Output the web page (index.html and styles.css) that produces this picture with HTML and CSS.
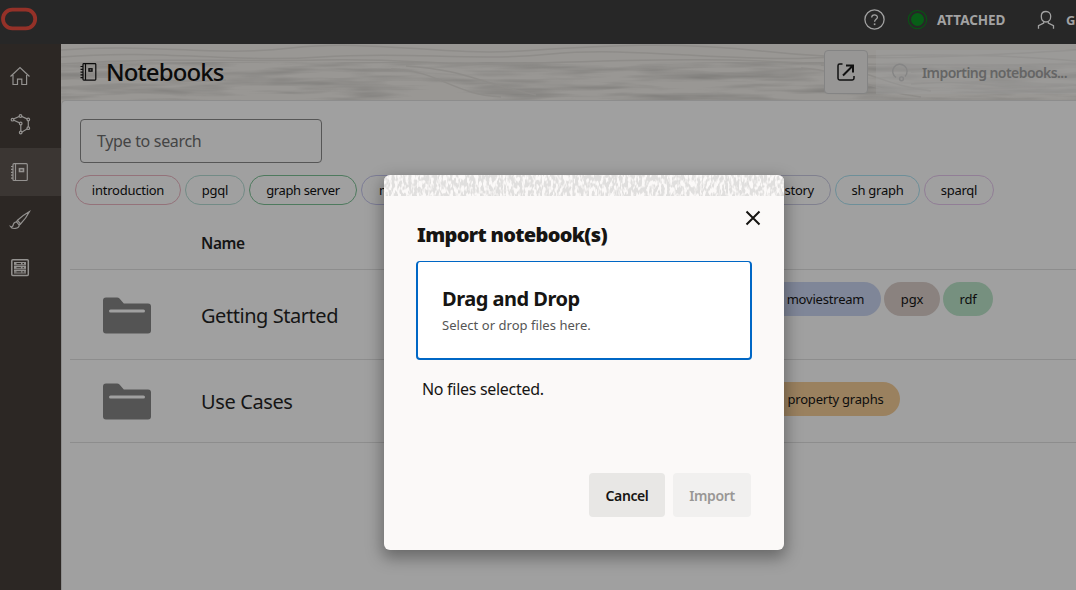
FILE: index.html
```html
<!DOCTYPE html>
<html lang="en">
<head>
<meta charset="utf-8">
<title>Notebooks</title>
<link rel="stylesheet" href="styles.css">
</head>
<body>
<div class="app">
  <header class="topbar">
    <svg class="logo" width="38" height="26" viewBox="0 0 38 26"><rect x="3" y="3.7" width="32.2" height="18.6" rx="9.3" fill="none" stroke="#943128" stroke-width="3.8"/></svg>
    <div class="topbar-right">
      <svg class="help" width="22" height="22" viewBox="0 0 22 22" fill="none" stroke="#a2a2a2" stroke-width="1.3"><circle cx="11.500" cy="10.500" r="9.600"/><path d="M8.700 8.500c0-3.600 5.700-3.500 5.700-.2 0 2.100-2.800 2-2.800 4.500"/><path d="M11.600 14.400v1.700" stroke-width="1.600"/></svg>
      <svg class="status" width="22" height="22" viewBox="0 0 22 22"><circle cx="11.500" cy="10.500" r="9.200" fill="none" stroke="#0c4f16" stroke-width="1.200"/><circle cx="11.500" cy="10.500" r="6.500" fill="#085e17"/></svg>
      <span class="attached">ATTACHED</span>
      <svg class="user" width="18" height="20" viewBox="0 0 18 20" fill="none" stroke="#a2a2a2" stroke-width="1.300"><path d="M9 1.500c-3 0-4.700 2-4.700 4.700C4.300 9.500 6 12 9 12s4.700-2.500 4.700-5.800C13.700 3.500 12 1.500 9 1.500z"/><path d="M6.700 11.500v1.700L1.500 15.700v3M11.300 11.500v1.700l5.200 2.500v3"/></svg>
      <span class="account">G</span>
    </div>
  </header>
  <div class="body">
    <nav class="sidebar">
      <a class="nav"><svg width="22" height="22" viewBox="0 0 22 22"><path d="M1.500 11.500 11 2.500l9.500 9M4 10v9.500h4.500v-5.300h4.300v5.300h4.800V10"/></svg></a>
      <a class="nav"><svg width="22" height="22" viewBox="0 0 22 22"><path d="M3.300 6.500 11.500 3l7.800 3.500v8.700l-7.500 4.500V10.500z"/><g class="dots"><circle cx="3.500" cy="6.700" r="1.300"/><circle cx="11.500" cy="3" r="1.300"/><circle cx="19.300" cy="6.500" r="1.300"/><circle cx="11.700" cy="10.500" r="1.300"/><circle cx="19.300" cy="15.200" r="1.300"/><circle cx="11.700" cy="19.500" r="1.300"/></g></svg></a>
      <a class="nav active"><svg width="22" height="22" viewBox="0 0 22 22"><rect x="4" y="2.700" width="14.300" height="16.800" rx="1"/><path d="M6.500 3v16.500M2 5.500h2M2 8.400h2M2 11.300h2M2 14.200h2M2 17.100h2"/><rect x="10.500" y="7.700" width="4" height="2.800" stroke-width="1.600"/></svg></a>
      <a class="nav"><svg width="22" height="22" viewBox="0 0 22 22"><path d="M20.500 2.500C16 5 12 8 8.500 11.300l3 3.700C15 11.500 18 7.500 20.500 2.500zM8.500 11.300l-1 1.500 2.700 3.400 1.300-1.200M7.500 12.800c-2 .2-3.200 1.500-3.500 4-.4 1-1.500 1.200-2.500.6 1.500 3.400 8.500 2.400 8.700-1.200"/></svg></a>
      <a class="nav"><svg width="22" height="22" viewBox="0 0 22 22"><rect x="2.800" y="2.800" width="16.500" height="15.700" rx="1" stroke-width="1.500"/><path stroke-width="1.200" d="M5 5.500h12M5 7.800h12M5 9.600h12M5 11.900h12M5 13.700h12M5 16h12"/><path stroke-width="1.400" d="M5 6.700h2.500M12 6.700h1.500M15 6.700h2M5 10.800h2.500M12 10.800h1.500M15 10.800h2M5 14.900h2.500M12 14.900h1.500M15 14.900h2"/></svg></a>
    </nav>
    <main class="main">
      <div class="page-head">
        <svg class="grain" width="1015" height="56">
          <defs>
            <filter id="wood" x="0" y="0" width="100%" height="100%" color-interpolation-filters="sRGB"><feTurbulence type="fractalNoise" baseFrequency="0.012 0.14" numOctaves="3" seed="8"/><feColorMatrix values="0 0 0 0 .45  0 0 0 0 .445  0 0 0 0 .435  1.3 0 0 0 -.5"/></filter>
            <filter id="stipple" x="0" y="0" width="100%" height="100%" color-interpolation-filters="sRGB"><feTurbulence type="fractalNoise" baseFrequency="0.36 0.16" numOctaves="2" seed="4"/><feColorMatrix values="0 0 0 0 .88  0 0 0 0 .875  0 0 0 0 .87  5 0 0 0 -1.9"/></filter>
          </defs>
          <rect y="18" width="1015" height="38" filter="url(#wood)"/>
          <g fill="none" stroke="#8e8c89" stroke-width="1.500">
            <path d="M0 6C90-1 150 13 230 4s150 8 230 3 150-10 240 0 170 8 315-1M0 13c100-8 170 6 260 0s150 5 230-3 170 8 260 4 180-5 265 3M0 20c110-7 180-2 260-4s130 6 190 4 170-7 250-3 170 5 315 3"/>
            <path d="M330 25c50 2 60 25 110 28M345 22c60 4 70 16 130 29M740 24c50 3 70 24 120 29M760 21c50 4 60 20 110 26M850 28c60-6 100 8 165 1M850 40c60-6 100 8 165 1M0 35c60-6 100 6 165 1"/>
          </g>
        </svg>
        <div class="title"><svg width="20" height="22" viewBox="0 0 20 22" fill="none" stroke="#0b0b0b" stroke-width="1.200"><rect x="4" y="2.600" width="12.800" height="16.500" rx=".8"/><path d="M6.500 3v16M1.500 5.500H4M1.500 8.300H4M1.500 11.100H4M1.500 13.900H4M1.500 16.700H4"/><rect x="10" y="7.800" width="3" height="2.300" stroke-width="1.400"/></svg><h1>Notebooks</h1></div>
        <div class="head-actions">
          <button class="open"><svg width="22" height="22" viewBox="0 0 22 22" fill="none" stroke="#101010" stroke-width="1.500"><path d="M7.500 3H4.700Q3 3 3 4.700v12.600Q3 19 4.700 19h12.600q1.700 0 1.700-1.700V15"/><path stroke-width="2" d="M8 14.500 18 4.500M11 4.500h7v7"/></svg></button>
          <div class="importing"><svg width="18" height="20" viewBox="0 0 18 20" fill="none" stroke="#858585" stroke-width="1.400"><path d="M5 15.500A7.200 7.200 0 1 1 14 14.500"/><circle cx="10.500" cy="16.800" r="1.900"/></svg><span>Importing notebooks...</span></div>
        </div>
      </div>
      <section class="content">
        <div class="search">Type to search</div>
        <div class="filters">
          <span class="pill intro"><b>introduction</b></span><span class="pill pgql"><b>pgql</b></span><span class="pill server"><b>graph server</b></span><span class="pill movie"><b>moviestream</b></span><span class="pill history"><b>property story</b></span><span class="pill sh"><b>sh graph</b></span><span class="pill sparql"><b>sparql</b></span>
        </div>
        <div class="table">
          <div class="row head"><span class="name">Name</span></div>
          <div class="row first">
            <svg class="folder" width="48" height="37" viewBox="0 0 48 37"><path fill="#545454" fill-rule="evenodd" d="M3 .5h11q1.500 0 2.500 1l4.300 5H45q3 0 3 3v24q0 3-3 3H3q-3 0-3-3v-30Q0 .5 3 .5zM7.500 12.500a1.500 1.500 0 0 0 0 3h33a1.500 1.500 0 0 0 0-3z"/></svg>
            <span class="name">Getting Started</span>
            <span class="tags"><span class="tag blue">moviestream</span><span class="tag brown">pgx</span><span class="tag green">rdf</span></span>
          </div>
          <div class="row second">
            <svg class="folder" width="48" height="37" viewBox="0 0 48 37"><path fill="#545454" fill-rule="evenodd" d="M3 .5h11q1.500 0 2.500 1l4.300 5H45q3 0 3 3v24q0 3-3 3H3q-3 0-3-3v-30Q0 .5 3 .5zM7.500 12.500a1.500 1.500 0 0 0 0 3h33a1.500 1.500 0 0 0 0-3z"/></svg>
            <span class="name cases">Use Cases</span>
            <span class="tags"><span class="tag orange">property graphs</span></span>
          </div>
        </div>
      </section>
    </main>
  </div>
  <div class="dialog" role="dialog">
    <svg class="strip" width="400" height="21"><rect width="400" height="21" filter="url(#stipple)"/></svg>
    <div class="dialog-body">
      <div class="dialog-head"><h2>Import notebook(s)</h2><svg class="close" width="16" height="16" viewBox="0 0 16 16" stroke="#161513" stroke-width="2"><path d="M1.500 1.500l13 13M14.500 1.500l-13 13"/></svg></div>
      <div class="drop"><strong>Drag and Drop</strong><span>Select or drop files here.</span></div>
      <p class="none">No files selected.</p>
      <div class="buttons"><button class="cancel">Cancel</button><button class="import">Import</button></div>
    </div>
  </div>
</div>
</body>
</html>
```

FILE: styles.css
```css
* { box-sizing: border-box; }
body { margin: 0; font-family: "Noto Sans", "Open Sans", sans-serif; overflow: hidden; }
h1, h2, p { margin: 0; }
button { font-family: inherit; padding: 0; }
svg { display: block; flex: none; }
.app { position: relative; width: 1076px; height: 590px; overflow: hidden; background: #a0a0a0; }

.topbar { height: 44px; background: #272727; display: flex; justify-content: space-between; color: #a2a2a2; overflow: hidden; }
.logo { margin-top: 6px; }
.topbar-right { display: flex; align-items: center; width: 213px; height: 39px; font-size: 14px; font-weight: 700; }
.status { margin-left: 21px; }
.attached { margin-left: 9px; width: 100px; flex: none; letter-spacing: -.05px; font-size: 13.5px; }
.user { margin-right: 11px; }
.account { font-size: 13px; }

.body { display: flex; height: 546px; }
.sidebar { width: 61px; background: #2c2724; padding-top: 8px; }
.nav { display: flex; align-items: center; height: 48px; padding-left: 9px; }
.nav.active { background: #3b3633; }
.nav svg { fill: none; stroke: #949290; stroke-width: 1.2; }
.dots { fill: #2c2724; }

.main { flex: 1; min-width: 0; background: #999794; }
.page-head { height: 56px; display: grid; overflow: hidden; }
.page-head > * { grid-area: 1 / 1; }
.title { display: flex; align-items: center; padding-left: 18px; z-index: 1; }
.title h1 { margin-left: 7px; font-size: 24px; font-weight: 500; color: #0b0b0b; letter-spacing: -.9px; line-height: 56px; }
.head-actions { display: flex; padding: 6px 0 0 763px; z-index: 1; }
.open { width: 44px; height: 44px; border: 1px solid #848484; border-radius: 4px; background: #979695; display: flex; align-items: center; justify-content: center; }
.importing { display: flex; align-items: center; margin-left: 8px; padding-left: 15px; width: 220px; height: 44px; background: rgba(160, 160, 160, .35); color: #656565; font-size: 14px; font-weight: 600; white-space: nowrap; letter-spacing: -.56px; }
.importing span { margin-left: 13px; }

.content { height: 490px; border: 1px solid #8d8d8d; border-width: 1px 0 0 1px; border-radius: 5px 0 0 0; background: #a0a0a0; padding: 18px 0 0 8px; }
.search { width: 242px; height: 44px; margin-left: 10px; border: 1px solid #565656; border-radius: 4px; padding-left: 16px; line-height: 42px; font-size: 16px; color: #444; letter-spacing: -.32px; }
.filters { display: flex; gap: 4px; margin: 12px 0 0 5px; }
.pill { height: 30px; border: 1px solid; border-radius: 15px; flex: none; font-size: 13px; line-height: 28px; text-align: center; white-space: nowrap; letter-spacing: -.25px; }
.pill b { color: #0b0b0b; font-weight: 400; }
.intro { width: 106px; border-color: #94727a; }
.pgql { width: 60px; border-color: #728b86; }
.server { width: 108px; border-color: #4e7a5e; }
.server b { letter-spacing: -.38px; }
.movie { width: 108px; border-color: #7d7d96; text-align: left; padding-left: 17px; }
.history { width: 358px; border-color: #80808f; text-align: right; padding-right: 16px; }
.sh { width: 85px; border-color: #6d8f99; }
.sparql { width: 70px; border-color: #917e96; }

.row { display: flex; align-items: center; border-bottom: 1px solid #8d8d8d; }
.head { height: 65px; padding: 12px 0 0 131px; font-size: 15.5px; font-weight: 600; }
.name { color: #151515; }
.head .name { letter-spacing: -.4px; }
.first { height: 90px; padding-left: 33px; }
.second { height: 83px; padding-left: 33px; }
.first .name, .second .name { flex: none; margin-left: 50px; width: 300px; font-size: 20px; letter-spacing: -.45px; white-space: nowrap; }
.second .cases { letter-spacing: -.38px; }
.first .folder, .first .name { margin-top: 2px; }
.tags { display: flex; flex: none; gap: 3px; margin-left: 250px; width: 300px; align-self: flex-start; margin-top: 12px; }
.second .tags { margin-top: 22px; }
.tag { height: 34px; border-radius: 17px; font-size: 13px; line-height: 34px; text-align: center; color: #0d0d0d; letter-spacing: -.2px; white-space: nowrap; }
.blue { width: 130px; padding-left: 19px; background: #7f8698; }
.brown { width: 56px; background: #8a827f; }
.green { width: 50px; background: #76907f; }
.orange { width: 149px; padding-left: 20px; background: #9a815f; }

.dialog { position: absolute; left: 384px; top: 175px; width: 400px; height: 375px; border-radius: 6px; background: #fbf9f8; overflow: hidden; box-shadow: 0 6px 16px 2px rgba(0, 0, 0, .35); }
.dialog-body { padding: 0 32px; }
.dialog-head { display: flex; justify-content: space-between; height: 65px; }
.dialog-head h2 { margin: 24px 0 0 1px; font-size: 20px; line-height: 30px; font-weight: 900; color: #161513; letter-spacing: -.67px; }
.close { margin: 14px -9px 0 0; }
.drop { display: flex; flex-direction: column; width: 336px; height: 99px; border: 2px solid #0067c5; border-top-width: 1px; border-radius: 4px; background: #fff; padding: 23px 24px; }
.drop strong { font-size: 20px; line-height: 28px; color: #161513; letter-spacing: -.5px; }
.drop span { font-size: 13px; line-height: 24px; color: #555; letter-spacing: .04px; }
.none { margin: 17px 0 0 6px; font-size: 16px; line-height: 24px; color: #161513; letter-spacing: -.3px; }
.buttons { display: flex; justify-content: flex-end; gap: 8px; margin: 72px 1px 0 0; }
.buttons button { height: 44px; border: 0; border-radius: 4px; font-size: 14px; font-weight: 600; letter-spacing: -.4px; }
.buttons .cancel { width: 76px; background: #e8e7e5; color: #161513; }
.buttons .import { width: 78px; background: #f1f0ef; color: #999795; }
```
